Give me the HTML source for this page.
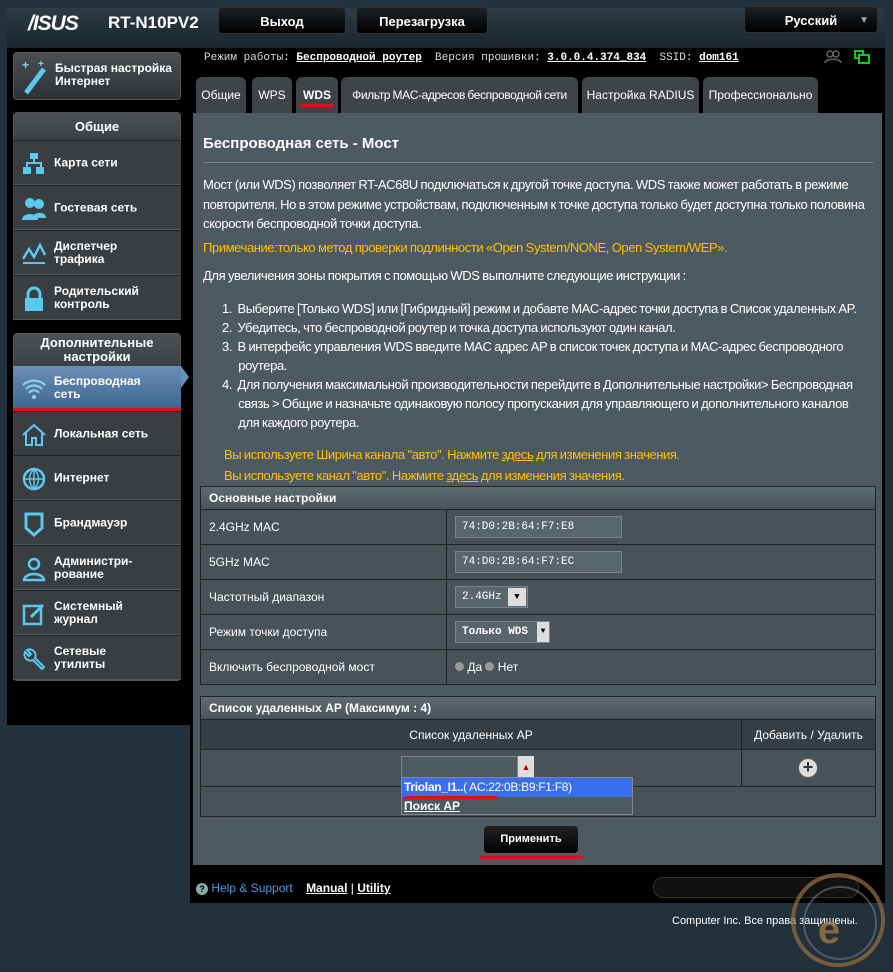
<!DOCTYPE html>
<html><head><meta charset="utf-8"><style>
*{margin:0;padding:0;box-sizing:border-box}
body{width:893px;height:972px;background:#22313c;font-family:"Liberation Sans",sans-serif;color:#fff;position:relative;overflow:hidden;font-size:13px}
.a{position:absolute}
.frame{left:7px;top:8px;width:878px;height:40px;background:linear-gradient(#2e3c45,#1a252c);border-radius:4px 4px 0 0}
.hbtn{position:absolute;top:7px;height:27px;background:linear-gradient(#1b2226,#000);border-radius:4px;color:#fff;font-weight:bold;font-size:13px;text-align:center;line-height:27px;border:1px solid #333}
.side{left:7px;top:48px;width:184px;height:677px;background:#000}
.main{left:190px;top:48px;width:695px;height:855px;background:#000}
.box{position:absolute;left:13px;width:168px;background:#3a3e41;border:1px solid #555;border-radius:4px}
.gh{font-weight:bold;font-size:13px;text-align:center;color:#fff;background:linear-gradient(#4a5257,#3a4044);border-radius:4px 4px 0 0}
.it{position:absolute;left:13px;width:168px;height:45px;background:#3a3e41;border-top:1px solid #222;border-bottom:1px solid #555;font-weight:bold;font-size:12px;line-height:13px}
.it span{position:absolute;left:41px;top:50%;transform:translateY(-50%)}
.it svg{position:absolute;left:8px;top:10px}
.tab{position:absolute;top:77px;height:36px;background:#3e4549;border-radius:6px 6px 0 0;font-size:12px;line-height:36px;text-align:center;color:#fff;white-space:nowrap;overflow:hidden}
.panel{left:193px;top:113px;width:689px;height:752px;background:#4d5a62}
.y{color:#ffc000}
.tx{letter-spacing:-0.4px;word-spacing:-0.5px}
.tb{position:absolute;left:200px;width:676px;border:1px solid #222}
.row{position:relative;border-top:1px solid #222;background:#475259;font-size:12px}
.row .l{position:absolute;left:8px;top:50%;transform:translateY(-50%)}
.row .r{position:absolute;left:254px;top:50%;transform:translateY(-50%)}
.row .sep{position:absolute;left:245px;top:0;bottom:0;width:1px;background:#222}
.th{background:linear-gradient(#5f6b72,#48535a);height:22px;font-weight:bold;font-size:12px;line-height:22px;padding-left:8px}
.inp{display:inline-block;height:22px;background:#5a666d;border:1px solid #7b868c;font-family:"Liberation Mono",monospace;font-size:11px;line-height:20px;padding-left:6px;color:#fff;vertical-align:middle}
</style></head><body>
<div class="a frame"></div>
<div class="a" style="left:28px;top:12px;font-size:21px;font-weight:bold;font-style:italic;letter-spacing:-1px">/ISUS</div>
<div class="a" style="left:108px;top:13px;font-size:17px;font-weight:bold">RT-N10PV2</div>
<div class="hbtn" style="left:218px;width:128px">Выход</div>
<div class="hbtn" style="left:356px;width:132px">Перезагрузка</div>
<div class="hbtn" style="left:744px;width:134px;top:6px">Русский <span style="position:absolute;right:8px;color:#9aa;font-size:10px">▼</span></div>
<div class="a side"></div>
<div class="a main"></div>
<div class="a" style="left:13px;top:52px;width:168px;height:48px;background:linear-gradient(#4a4f52,#2e3235);border:1px solid #555;border-radius:4px;font-weight:bold;font-size:12px;line-height:13px"><svg class="a" style="left:4px;top:4px" width="40" height="40"><line x1="8" y1="36" x2="26" y2="12" stroke="#5ac8f0" stroke-width="5"/><text x="4" y="12" fill="#8ce" font-size="12">+</text><text x="20" y="10" fill="#8ce" font-size="10">+</text></svg><span class="a" style="left:41px;top:9px">Быстрая настройка<br>Интернет</span></div>
<div class="box" style="top:112px;height:208px"><div class="gh" style="height:28px;line-height:28px">Общие</div></div>
<div class="it" style="top:140px"><svg width="26" height="26"><rect x="9" y="2" width="8" height="6" fill="#5ac8f0"/><rect x="2" y="16" width="8" height="7" fill="#5ac8f0"/><rect x="15" y="16" width="8" height="7" fill="#5ac8f0"/><path d="M13 8v4M6 16v-4h14v4" stroke="#5ac8f0" fill="none" stroke-width="2"/></svg><span>Карта сети</span></div>
<div class="it" style="top:185px"><svg width="26" height="26"><circle cx="9" cy="7" r="5" fill="#5ac8f0"/><circle cx="18" cy="8" r="5" fill="#5ac8f0"/><path d="M1 24c0-8 16-8 16 0zM11 22c2-7 14-7 14 0z" fill="#5ac8f0"/></svg><span>Гостевая сеть</span></div>
<div class="it" style="top:230px"><svg width="26" height="26"><path d="M2 18l6-10 5 8 6-12 5 10" stroke="#5ac8f0" stroke-width="2.5" fill="none"/><path d="M2 22h22" stroke="#5ac8f0" stroke-width="2"/></svg><span>Диспетчер<br>трафика</span></div>
<div class="it" style="top:275px"><svg width="26" height="26"><path d="M7 12V8a6 6 0 0112 0v4" stroke="#5ac8f0" stroke-width="3" fill="none"/><rect x="4" y="12" width="18" height="13" fill="#5ac8f0"/></svg><span>Родительский<br>контроль</span></div>
<div class="box" style="top:333px;height:348px"><div class="gh" style="height:33px;line-height:14px;padding-top:2px">Дополнительные<br>настройки</div></div>
<div class="it" style="top:366px;background:linear-gradient(#6a8fb5,#3d6590);height:44px;border:none"><svg width="26" height="26"><path d="M2 9a16 16 0 0122 0M5 13a11 11 0 0116 0M8 17a6 6 0 0110 0" stroke="#8fd4f4" stroke-width="2" fill="none"/><circle cx="13" cy="21" r="2" fill="#8fd4f4"/></svg><span>Беспроводная<br>сеть</span></div>
<div class="a" style="left:181px;top:366px;width:0;height:0;border-left:8px solid #6a8fb5;border-top:11px solid transparent;border-bottom:11px solid transparent"></div>
<div class="a" style="left:13px;top:408px;width:168px;height:3px;background:#e0101a"></div>
<div class="it" style="top:411px"><svg width="26" height="26"><path d="M2 13L13 3l11 10M5 11v12h6v-7h4v7h6V11" stroke="#5ac8f0" stroke-width="2" fill="none"/></svg><span>Локальная сеть</span></div>
<div class="it" style="top:455px"><svg width="26" height="26"><circle cx="13" cy="13" r="10" stroke="#5ac8f0" stroke-width="2.5" fill="none"/><path d="M3 13h20M13 3v20M13 3c-6 6-6 14 0 20M13 3c6 6 6 14 0 20" stroke="#5ac8f0" stroke-width="1.5" fill="none"/></svg><span>Интернет</span></div>
<div class="it" style="top:500px"><svg width="26" height="26"><path d="M5 3h16v14l-8 7-8-7z" stroke="#5ac8f0" stroke-width="3" fill="none"/></svg><span>Брандмауэр</span></div>
<div class="it" style="top:545px"><svg width="26" height="26"><circle cx="13" cy="8" r="5" stroke="#5ac8f0" stroke-width="2.5" fill="none"/><path d="M3 24c1-8 19-8 20 0z" stroke="#5ac8f0" stroke-width="2.5" fill="none"/></svg><span>Администри-<br>рование</span></div>
<div class="it" style="top:590px"><svg width="26" height="26"><rect x="3" y="5" width="17" height="18" stroke="#5ac8f0" stroke-width="2.5" fill="none"/><path d="M10 16l12-12" stroke="#5ac8f0" stroke-width="3"/></svg><span>Системный<br>журнал</span></div>
<div class="it" style="top:635px"><svg width="26" height="26"><path d="M4 6a6 6 0 008 8l9 9 2-2-9-9a6 6 0 00-8-8l4 4-2 2z" stroke="#5ac8f0" stroke-width="2" fill="none"/></svg><span>Сетевые<br>утилиты</span></div>
<div class="a" style="left:204px;top:52px;font-family:'Liberation Mono',monospace;font-size:11px;color:#ddd;white-space:nowrap">Режим работы: <b style="color:#fff;text-decoration:underline">Беспроводной роутер</b>&nbsp; Версия прошивки: <b style="color:#fff;text-decoration:underline">3.0.0.4.374_834</b>&nbsp; SSID: <b style="color:#fff;text-decoration:underline">dom161</b></div>
<svg class="a" style="left:824px;top:48px" width="50" height="20"><circle cx="6" cy="6" r="3" stroke="#666" fill="none" stroke-width="1.5"/><circle cx="12" cy="6" r="3" stroke="#666" fill="none" stroke-width="1.5"/><path d="M1 15c0-5 16-5 16 0" stroke="#666" fill="none" stroke-width="1.5"/><rect x="31" y="3" width="8" height="7" stroke="#1c1" fill="none" stroke-width="2"/><rect x="35" y="7" width="10" height="8" stroke="#1c1" fill="#000" stroke-width="2"/></svg>
<div class="tab" style="left:196px;width:50px">Общие</div>
<div class="tab" style="left:252px;width:40px">WPS</div>
<div class="tab" style="left:296px;width:42px;font-weight:bold">WDS</div>
<div class="a" style="left:300px;top:104px;width:34px;height:3px;background:#e0101a"></div>
<div class="tab tx" style="left:341px;width:237px">Фильтр MAC-адресов беспроводной сети</div>
<div class="tab" style="left:582px;width:117px">Настройка RADIUS</div>
<div class="tab" style="left:703px;width:115px">Профессионально</div>
<div class="a panel"></div>
<div class="a" style="left:203px;top:135px;font-size:15px;font-weight:bold">Беспроводная сеть - Мост</div>
<div class="a" style="left:203px;top:162px;width:670px;height:1px;background:#7a868c"></div>
<div class="a tx" style="left:203px;top:175px;width:675px;line-height:19.5px;white-space:nowrap">Мост (или WDS) позволяет RT-AC68U подключаться к другой точке доступа. WDS также может работать в режиме<br>повторителя. Но в этом режиме устройствам, подключенным к точке доступа только будет доступна только половина<br>скорости беспроводной точки доступа.</div>
<div class="a y tx" style="left:203px;top:240px;white-space:nowrap">Примечание:только метод проверки подлинности «Open System/NONE, Open System/WEP».</div>
<div class="a tx" style="left:203px;top:268px;white-space:nowrap">Для увеличения зоны покрытия с помощью WDS выполните следующие инструкции :</div>
<div class="a tx" style="left:222px;top:299px;line-height:19px;white-space:nowrap">1.&nbsp; Выберите [Только WDS] или [Гибридный] режим и добавте MAC-адрес точки доступа в Список удаленных AP.<br>2.&nbsp; Убедитесь, что беспроводной роутер и точка доступа используют один канал.<br>3.&nbsp; В интерфейс управления WDS введите MAC адрес AP в список точек доступа и MAC-адрес беспроводного<br>&nbsp;&nbsp;&nbsp;&nbsp;&nbsp; роутера.<br>4.&nbsp; Для получения максимальной производительности перейдите в Дополнительные настройки&gt; Беспроводная<br>&nbsp;&nbsp;&nbsp;&nbsp;&nbsp; связь &gt; Общие и назначьте одинаковую полосу пропускания для управляющего и дополнительного каналов<br>&nbsp;&nbsp;&nbsp;&nbsp;&nbsp; для каждого роутера.</div>
<div class="a y tx" style="left:224px;top:444px;line-height:21px;white-space:nowrap">Вы используете Ширина канала "авто". Нажмите <u>здесь</u> для изменения значения.<br>Вы используете канал "авто". Нажмите <u>здесь</u> для изменения значения.</div>

<div class="tb" style="top:486px">
<div class="th">Основные настройки</div>
<div class="row" style="height:35px"><div class="sep"></div><span class="l">2.4GHz MAC</span><span class="r"><span class="inp" style="width:167px">74:D0:2B:64:F7:E8</span></span></div>
<div class="row" style="height:35px"><div class="sep"></div><span class="l">5GHz MAC</span><span class="r"><span class="inp" style="width:167px">74:D0:2B:64:F7:EC</span></span></div>
<div class="row" style="height:35px"><div class="sep"></div><span class="l">Частотный диапазон</span><span class="r"><span class="inp" style="width:73px">2.4GHz<span style="float:right;width:18px;height:18px;margin:1px;background:#ddd;color:#000;text-align:center;line-height:18px;font-size:9px">▼</span></span></span></div>
<div class="row" style="height:35px"><div class="sep"></div><span class="l">Режим точки доступа</span><span class="r"><span class="inp" style="width:95px;font-weight:bold">Только WDS<span style="float:right;width:12px;height:20px;background:#ddd;color:#000;text-align:center;font-size:8px">▼</span></span></span></div>
<div class="row" style="height:35px"><div class="sep"></div><span class="l">Включить беспроводной мост</span><span class="r" style="font-size:12px"><span style="display:inline-block;width:9px;height:9px;border-radius:50%;background:#999"></span> Да <span style="display:inline-block;width:9px;height:9px;border-radius:50%;background:#999"></span> Нет</span></div>
</div>

<div class="tb" style="top:696px">
<div class="th">Список удаленных AP (Максимум : 4)</div>
<div class="row" style="height:30px;background:#353e44"><div class="sep" style="left:540px"></div><span class="l" style="left:0;width:540px;text-align:center">Список удаленных AP</span><span class="r" style="left:540px;width:135px;text-align:center">Добавить / Удалить</span></div>
<div class="row" style="height:37px"><div class="sep" style="left:540px"></div><span class="r" style="left:596px"><span style="display:inline-block;width:22px;height:22px;border-radius:50%;background:#ddd;border:2px solid #555;color:#333;font-weight:bold;font-size:18px;line-height:17px;text-align:center">+</span></span></div>
<div class="row" style="height:30px"></div>
</div>
<div class="a" style="left:401px;top:756px;width:117px;height:22px;background:#4d5a62;border:1px solid #7b868c"></div>
<div class="a" style="left:518px;top:756px;width:16px;height:22px;background:#ddd;color:#c00;font-size:9px;text-align:center;line-height:22px">▲</div>
<div class="a" style="left:401px;top:777px;width:232px;height:38px;background:#4d5a62;border:1px solid #888"></div>
<div class="a" style="left:402px;top:778px;width:230px;height:19px;background:#3a6ef0;font-size:12px;line-height:19px;padding-left:2px;white-space:nowrap;letter-spacing:-0.3px"><b>Triolan_I1..</b>( AC:22:0B:B9:F1:F8)</div>
<div class="a" style="left:405px;top:796px;width:92px;height:3px;background:#e0101a"></div>
<div class="a" style="left:404px;top:799px;font-size:12px;font-weight:bold;text-decoration:underline">Поиск AP</div>
<div class="a" style="left:484px;top:826px;width:94px;height:27px;background:linear-gradient(#222,#000);border-radius:4px;font-size:11px;font-weight:bold;text-align:center;line-height:27px">Применить</div>
<div class="a" style="left:479px;top:856px;width:104px;height:3px;background:#e0101a"></div>
<div class="a" style="left:196px;top:881px;font-size:12px;color:#4a9de0;white-space:nowrap"><span style="display:inline-block;width:12px;height:12px;border-radius:50%;background:#8aa;color:#000;font-size:9px;text-align:center;line-height:12px;font-weight:bold">?</span> Help &amp; Support&nbsp;&nbsp;&nbsp; <b style="color:#fff;text-decoration:underline">Manual</b><span style="color:#fff"> | </span><b style="color:#fff;text-decoration:underline">Utility</b></div>
<div class="a" style="left:653px;top:877px;width:206px;height:21px;border:1px solid #333;border-radius:10px;background:#111"></div>
<div class="a" style="left:672px;top:915px;font-size:11px;color:#fff;white-space:nowrap">Computer Inc. Все права защищены.</div>
<svg class="a" style="left:768px;top:865px" width="125" height="105"><circle cx="70" cy="55" r="45" stroke="#9a7040" stroke-width="4" fill="none" opacity=".7"/><circle cx="72" cy="58" r="36" stroke="#777" stroke-width="2" fill="none" opacity=".6"/><text x="50" y="78" fill="#a07840" font-size="40" font-weight="bold" opacity=".8">e</text></svg>
</body></html>
